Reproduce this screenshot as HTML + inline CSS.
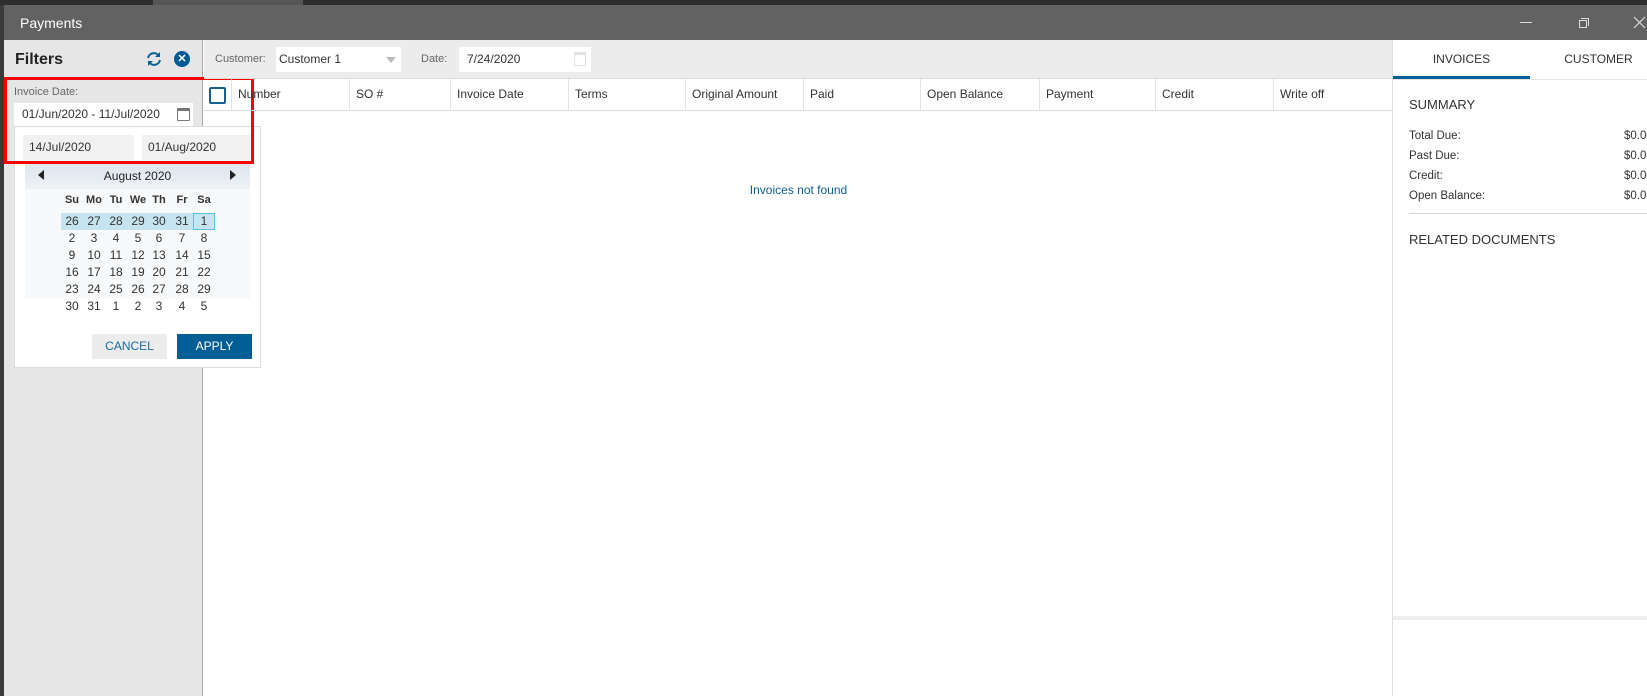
<!DOCTYPE html>
<html><head><meta charset="utf-8"><style>
*{margin:0;padding:0;box-sizing:border-box}
body{width:1647px;height:696px;overflow:hidden;font-family:"Liberation Sans",sans-serif;font-size:12px;color:#333;background:#fff;position:relative}
.a{position:absolute}
.th{position:absolute;top:79px;height:32px;line-height:31px;padding-left:6px;border-left:1px solid #e2e2e2;font-size:12px;color:#333}
.d{position:absolute;width:22px;text-align:center;font-size:12px;color:#333}
</style></head><body>
<div class="a" style="left:0;top:0;width:1647px;height:5px;background:#2d2d2d"></div>
<div class="a" style="left:153px;top:0;width:150px;height:5px;background:#555"></div>
<div class="a" style="left:0;top:5px;width:1647px;height:35px;background:#626262"></div>
<div class="a" style="left:0;top:5px;width:4px;height:691px;background:#3a3a3a"></div>
<div class="a" style="left:20px;top:15px;color:#fff;font-size:14px">Payments</div>
<div class="a" style="left:1520px;top:22px;width:12px;height:1px;background:#ddd"></div>
<div class="a" style="left:1579px;top:20px;width:8px;height:8px;border:1px solid #ddd"></div>
<div class="a" style="left:1581px;top:18px;width:8px;height:8px;border-top:1px solid #ddd;border-right:1px solid #ddd"></div>
<svg class="a" style="left:1633px;top:16px" width="13" height="13" viewBox="0 0 13 13"><path d="M1 1L12 12M12 1L1 12" stroke="#ddd" stroke-width="1.2"/></svg>

<!-- filters -->
<div class="a" style="left:4px;top:40px;width:199px;height:656px;background:#e6e6e6;border-right:1px solid #a8a8a8"></div>
<div class="a" style="left:15px;top:51px;font-size:16px;font-weight:bold;color:#222">Filters</div>
<svg class="a" style="left:145px;top:51px" width="18" height="16" viewBox="0 0 18 16"><path d="M3 7a6 6 0 0 1 11-2" stroke="#0a5f96" stroke-width="2" fill="none"/><path d="M15 1v5h-5z" fill="#0a5f96"/><path d="M15 9a6 6 0 0 1-11 2" stroke="#0a5f96" stroke-width="2" fill="none"/><path d="M3 15v-5h5z" fill="#0a5f96"/></svg>
<div class="a" style="left:174px;top:51px;width:16px;height:16px;border-radius:50%;background:#005a96;color:#fff;font-size:11px;line-height:16px;text-align:center;font-weight:bold">✕</div>
<div class="a" style="left:14px;top:86px;font-size:11px;color:#666">Invoice Date:</div>
<div class="a" style="left:14px;top:103px;width:179px;height:23px;background:#fff"></div>
<div class="a" style="left:22px;top:107px;font-size:12px">01/Jun/2020 - 11/Jul/2020</div>
<div class="a" style="left:177px;top:108px;width:13px;height:13px;border:1.5px solid #777;border-top-width:3px;border-radius:1px"></div>

<div class="a" style="left:14px;top:126px;width:247px;height:242px;background:#fff;border:1px solid #dcdcdc"></div>
<div class="a" style="left:23px;top:135px;width:111px;height:25px;background:#f1f1f1;padding:5px 6px;font-size:12px">14/Jul/2020</div>
<div class="a" style="left:142px;top:135px;width:110px;height:25px;background:#f1f1f1;padding:5px 6px;font-size:12px">01/Aug/2020</div>
<div class="a" style="left:25px;top:163px;width:225px;height:26px;background:linear-gradient(#dde4ec,#eef2f6)"></div>
<div class="a" style="left:38px;top:170px;width:0;height:0;border-top:5px solid transparent;border-bottom:5px solid transparent;border-right:6px solid #222"></div>
<div class="a" style="left:230px;top:170px;width:0;height:0;border-top:5px solid transparent;border-bottom:5px solid transparent;border-left:6px solid #222"></div>
<div class="a" style="left:25px;top:169px;width:225px;text-align:center;font-size:12px;color:#222">August 2020</div>
<div class="a" style="left:25px;top:189px;width:225px;height:110px;background:#f8f9fa"></div>
<div class="a" style="left:61px;top:213px;width:154px;height:17px;background:#c6e4ef"></div>
<div class="a" style="left:193px;top:213px;width:22px;height:17px;border:1px solid #5bc4e6"></div>
<div id="cal"></div>

<div class="a" style="left:92px;top:334px;width:75px;height:25px;background:#ececec;color:#1e6a9c;text-align:center;line-height:25px;font-size:12px">CANCEL</div>
<div class="a" style="left:177px;top:334px;width:75px;height:25px;background:#005e94;color:#fff;text-align:center;line-height:25px;font-size:12px">APPLY</div>
<div class="a" style="left:4px;top:77px;width:250px;height:87px;border:3px solid #f00"></div>

<!-- main -->
<div class="a" style="left:204px;top:40px;width:1189px;height:39px;background:#ececec;border-bottom:1px solid #dcdcdc"></div>
<div class="a" style="left:215px;top:53px;font-size:11px;color:#666">Customer:</div>
<div class="a" style="left:276px;top:47px;width:125px;height:25px;background:#fff;padding:5px 3px;font-size:12px">Customer 1</div>
<div class="a" style="left:386px;top:57px;border-left:5px solid transparent;border-right:5px solid transparent;border-top:6px solid #bbb"></div>
<div class="a" style="left:421px;top:53px;font-size:11px;color:#666">Date:</div>
<div class="a" style="left:459px;top:47px;width:132px;height:25px;background:#fff;padding:5px 8px;font-size:12px">7/24/2020</div>
<div class="a" style="left:574px;top:52px;width:12px;height:14px;border:1px solid #e2e2e2;border-top-width:3px"></div>
<div class="a" style="left:204px;top:110px;width:1188px;height:1px;background:#dcdcdc"></div>
<div class="a" style="left:209px;top:87px;width:17px;height:17px;border:2px solid #1a5f94;border-radius:2px"></div>
<div class="th" style="left:231px">Number</div>
<div class="th" style="left:349px">SO #</div>
<div class="th" style="left:450px">Invoice Date</div>
<div class="th" style="left:568px">Terms</div>
<div class="th" style="left:685px">Original Amount</div>
<div class="th" style="left:803px">Paid</div>
<div class="th" style="left:920px">Open Balance</div>
<div class="th" style="left:1039px">Payment</div>
<div class="th" style="left:1155px">Credit</div>
<div class="th" style="left:1273px">Write off</div>
<div class="a" style="left:204px;top:183px;width:1189px;text-align:center;color:#0b5e96;font-size:12px">Invoices not found</div>

<!-- right -->
<div class="a" style="left:1392px;top:40px;width:1px;height:656px;background:#e0e0e0"></div>
<div class="a" style="left:1393px;top:79px;width:254px;height:1px;background:#e6e6e6"></div>
<div class="a" style="left:1393px;top:52px;width:137px;text-align:center;font-size:12px;color:#333">INVOICES</div>
<div class="a" style="left:1530px;top:52px;width:137px;text-align:center;font-size:12px;color:#333">CUSTOMER</div>
<div class="a" style="left:1393px;top:76px;width:137px;height:3px;background:#0b5e96"></div>
<div class="a" style="left:1409px;top:97px;font-size:13px;color:#333">SUMMARY</div>
<div class="a" style="left:1409px;top:126px;font-size:11.5px;line-height:20px">Total Due:<br>Past Due:<br>Credit:<br>Open Balance:</div>
<div class="a" style="left:1624px;top:126px;font-size:11.5px;line-height:20px">$0.00<br>$0.00<br>$0.00<br>$0.00</div>
<div class="a" style="left:1409px;top:213px;width:238px;height:1px;background:#d5d5d5"></div>
<div class="a" style="left:1409px;top:232px;font-size:13px;color:#333">RELATED DOCUMENTS</div>
<div class="a" style="left:1393px;top:616px;width:254px;height:4px;background:#eeeeee"></div>

<script>
var xs=[61,83,105,127,148,171,193],ys=[213,230,247,264,281,298];
var h='';['Su','Mo','Tu','We','Th','Fr','Sa'].forEach(function(t,i){h+='<div class="d" style="left:'+xs[i]+'px;top:194px;font-weight:bold;font-size:11px">'+t+'</div>'});
var days=[26,27,28,29,30,31,1];for(var n=2;n<=31;n++)days.push(n);days=days.concat([1,2,3,4,5]);
days.forEach(function(d,k){h+='<div class="d" style="left:'+xs[k%7]+'px;top:'+(ys[Math.floor(k/7)]+1)+'px">'+d+'</div>'});
document.getElementById('cal').innerHTML=h;
</script>
</body></html>
